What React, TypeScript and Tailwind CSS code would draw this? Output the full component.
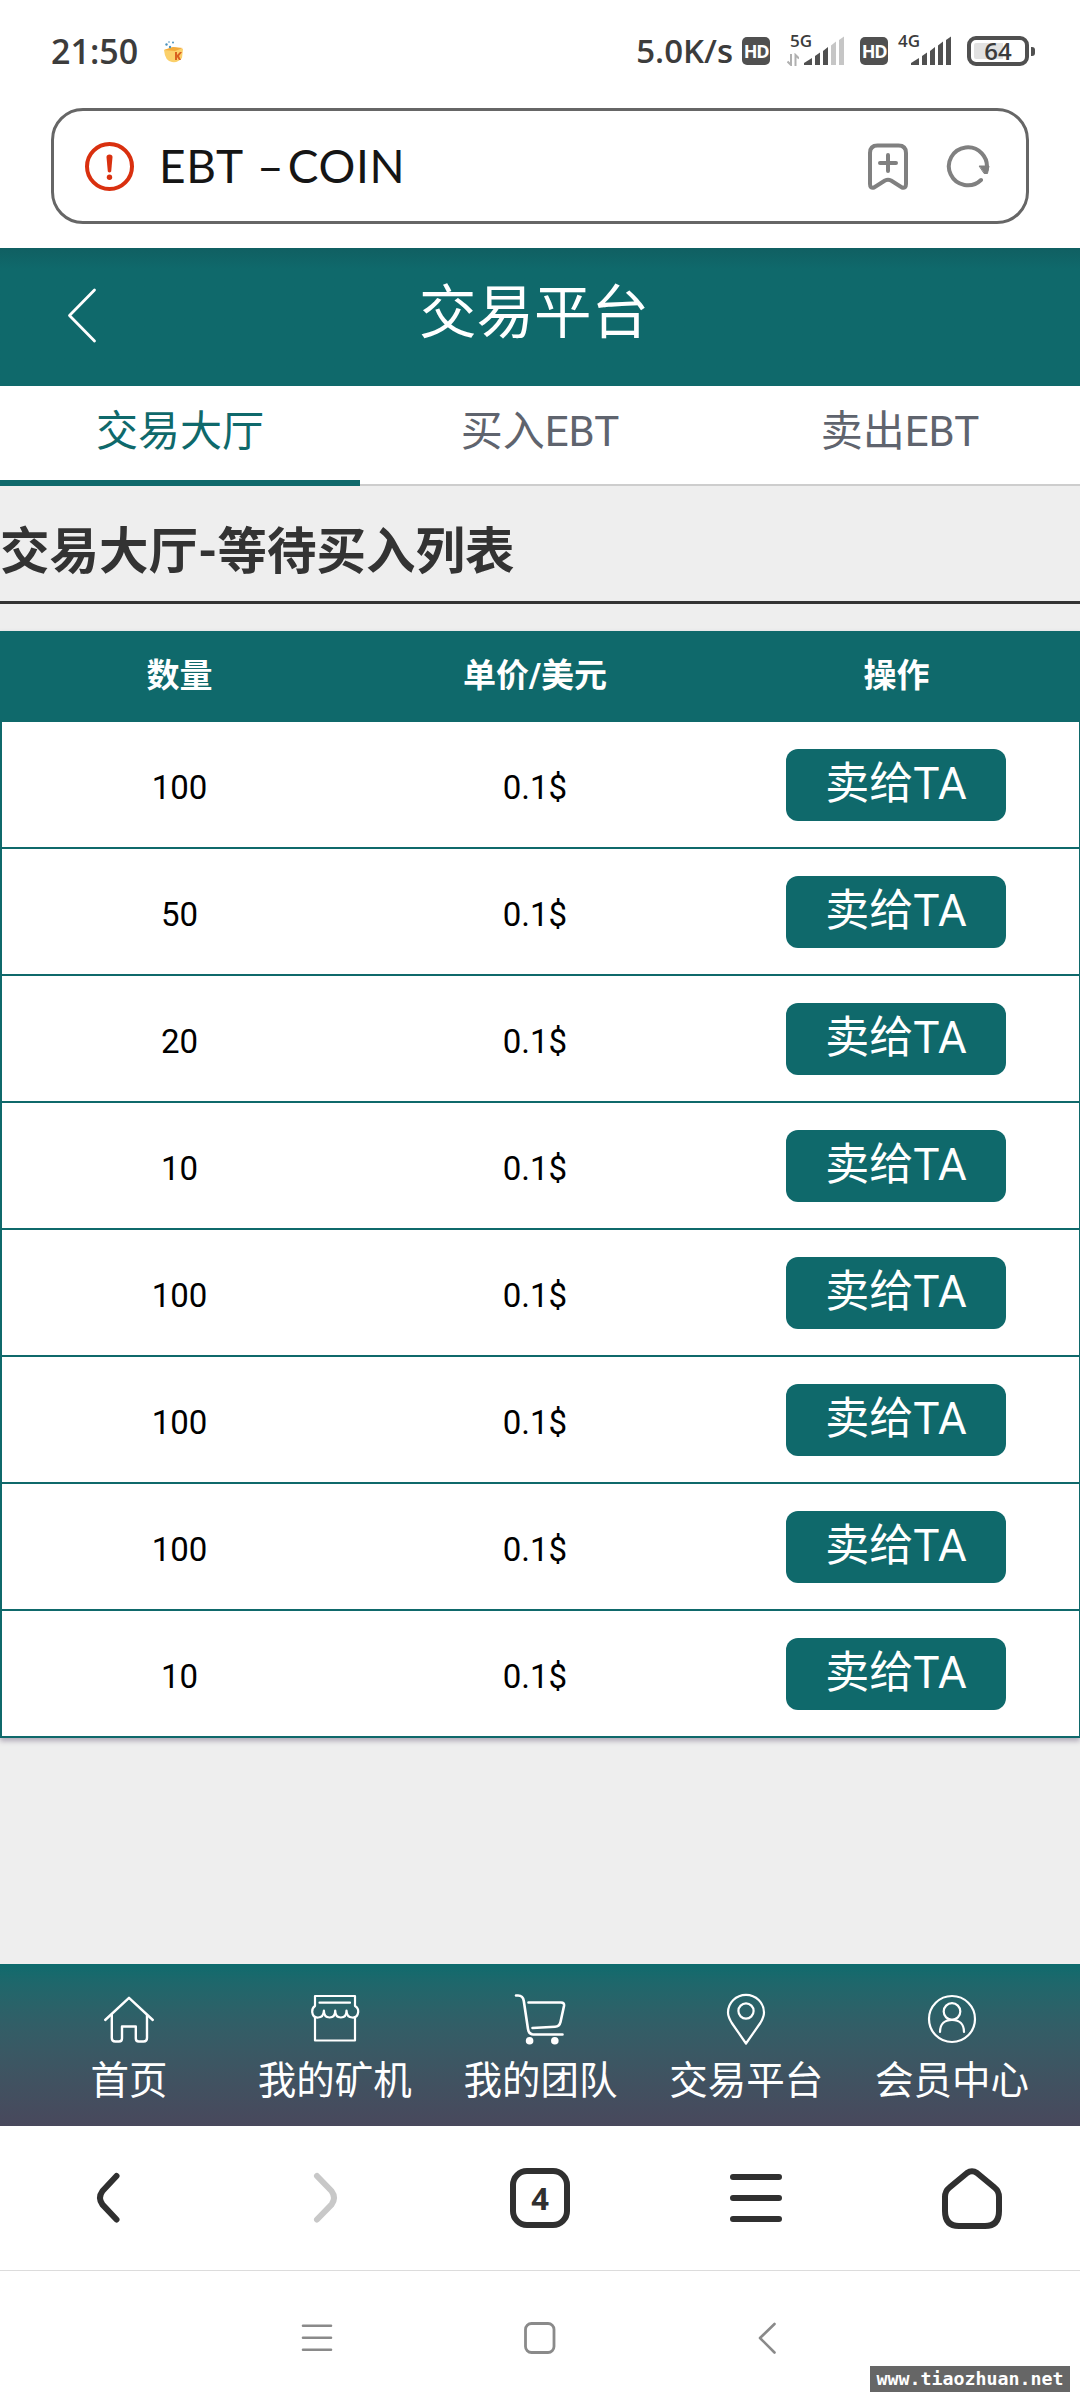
import type { ReactNode } from "react";

const CJK = "font-['Roboto','Noto_Sans_CJK_SC',sans-serif]";

type IconProps = { box: string; w: number; h: number; children: ReactNode; className?: string };

function Icon({ box, w, h, children, className = "" }: IconProps) {
  return (
    <svg
      viewBox={box}
      width={w}
      height={h}
      fill="none"
      stroke="currentColor"
      strokeLinecap="round"
      strokeLinejoin="round"
      className={`block shrink-0 ${className}`}
    >
      {children}
    </svg>
  );
}

function SignalBars({ strong }: { strong: number }) {
  const bars = [
    "M0 28V26L8 21V28Z",
    "M11 28V19L16 15.5V28Z",
    "M19 28V14L24 10V28Z",
    "M27 28V8.500L32 4.500V28Z",
    "M35 28V3L40 -0.500V28Z",
  ];
  return (
    <svg viewBox="0 -1 40 30" width="40" height="30" className="block">
      {bars.map((d, i) => (
        <path key={d} d={d} fill={i < strong ? "#505050" : "#c6c6c6"} />
      ))}
    </svg>
  );
}

function HdBadge() {
  return (
    <div className="flex h-7 w-7 items-center justify-center rounded-[5px] bg-[#505050] font-['Open_Sans',sans-serif] text-[18px] leading-none font-bold tracking-[-1.2px] text-white">
      HD
    </div>
  );
}

function StatusBar() {
  return (
    <div className="flex h-[108px] items-start pt-[34px] pr-[45px] pl-[51px] font-['Open_Sans',sans-serif] text-[#3c3c3c]">
      <div className="w-[89px] text-[34px] leading-[34px] font-semibold whitespace-nowrap">21:50</div>
      <svg viewBox="162 40 22 24" width="22" height="24" className="mt-[6px] ml-[22px] block">
        <path d="M164 50l9-3 10 2-1 9q-4 5-10 4-7-1-8-12Z" fill="#fbd06a" />
        <path d="M164 50l9-3 10 1-8 3Z" fill="#f3ab3c" />
        <path d="M175 52l2 0v3l3-3h2l-3 4 2 4h-2l-2-3v3h-2Z" fill="#d9601f" />
        <g fill="#4c93bd">
          <circle cx="166.500" cy="44.500" r="1.200" />
          <circle cx="170" cy="47" r="1.200" />
          <circle cx="173" cy="42.500" r="1" />
          <circle cx="169" cy="42" r="0.800" />
        </g>
      </svg>
      <div className="ml-auto text-[33px] leading-[34px] font-semibold whitespace-nowrap">5.0K/s</div>
      <div className="mt-[3px] ml-[9px]">
        <HdBadge />
      </div>
      <div className="ml-[17px] flex w-[57px] justify-between">
        <div className="flex w-[16px] flex-col">
          <span className="pl-[3px] text-[17px] leading-[13px] font-semibold">5G</span>
          <svg viewBox="787 52 12 13" width="12" height="13" className="mt-[6px] block" fill="none" stroke="#b0b0b0" strokeWidth="2">
            <path d="M791 53V64L787.500 60.500M795.500 65V54L799 57.500" />
          </svg>
        </div>
        <div className="mt-[2px]">
          <SignalBars strong={3} />
        </div>
      </div>
      <div className="mt-[3px] ml-4">
        <HdBadge />
      </div>
      <div className="ml-[10px] flex w-[53px] justify-between">
        <span className="w-[13px] text-[17px] leading-[13px] font-semibold">4G</span>
        <div className="mt-[2px]">
          <SignalBars strong={5} />
        </div>
      </div>
      <div className="mt-[2px] ml-4 flex items-center gap-[2px]">
        <div className="flex h-[30px] w-[62px] items-center justify-center rounded-[9px] border-4 border-[#505050] bg-linear-to-r from-[#e2e2e2] from-60% to-white to-60% bg-clip-content p-[3px] text-[24px] leading-none font-semibold">
          64
        </div>
        <div className="h-[9px] w-1 rounded-r-[3px] bg-[#505050]" />
      </div>
    </div>
  );
}

function AddressBar() {
  return (
    <div className="mx-[51px] mb-6 flex h-[116px] items-center rounded-[32px] border-[3px] border-[#666] pr-[35px] pl-[31px]">
      <Icon box="85 142 49 49" w={49} h={49} className="text-[#d9300f]">
        <circle cx="109.500" cy="166.500" r="22.500" strokeWidth="4" />
        <path d="M106.500 157q0-2.500 3-2.500t3 2.500l-1.300 14.500q-1.700 2-3.400 0Z" fill="currentColor" stroke="none" />
        <circle cx="109.500" cy="177.200" r="2.700" fill="currentColor" stroke="none" />
      </Icon>
      <div className="ml-[25px] font-['Lato',sans-serif] text-[46px] leading-none tracking-[0.7px] whitespace-nowrap text-[#151515]">
        EBT{" "}<span className="pl-[2px] tracking-[4px]">–</span>COIN
      </div>
      <Icon box="867 142 42 47" w={42} h={47} className="ml-auto text-[#808080]">
        <path
          d="M870 152q0-7.500 7.500-7.500H898.500q7.500 0 7.500 7.500V183q0 4.500-4 3.500L891 179.500q-3-1.500-6 0L874 186.500q-4 1-4-3.500Z"
          strokeWidth="4"
        />
        <path d="M888 154V170M880 162H896" strokeWidth="4" />
      </Icon>
      <Icon box="945 143 46 46" w={46} h={46} className="ml-9 text-[#808080]">
        <path d="M981 180A19 19 0 1 1 986.500 170" strokeWidth="4" />
        <path d="M979.500 166H989L987.500 173.500H984.500Z" fill="currentColor" strokeWidth="1" />
      </Icon>
    </div>
  );
}

function PageHeader() {
  return (
    <header className="grid h-[138px] grid-cols-3 items-center bg-linear-to-b from-[#105f62] to-[#0f696b] to-15% text-white">
      <Icon box="66 287 32 58" w={32} h={58} className="-mt-1 ml-[66px]">
        <path d="M94.500 291L69.500 316.500L94.500 342" strokeWidth="2.800" />
      </Icon>
      <h1 className="-mt-[6px] pr-[12px] text-center text-[57.500px] leading-none whitespace-nowrap">交易平台</h1>
    </header>
  );
}

function Tabs() {
  return (
    <nav className="flex h-[100px] bg-white text-center text-[42px] leading-[92px] text-[#5f646e]">
      <div className="flex-1 border-b-[6px] border-[#0f696b] text-[#0f696b]">交易大厅</div>
      <div className="flex-1 border-b-2 border-[#cdcdcd]">买入EBT</div>
      <div className="flex-1 border-b-2 border-[#cdcdcd]">卖出EBT</div>
    </nav>
  );
}

const amounts = [100, 50, 20, 10, 100, 100, 100, 10];

function OrderTable() {
  return (
    <section className="mt-[27px] bg-white shadow-[0_3px_5px_rgba(60,40,80,0.35)]">
      <div className="grid h-[91px] grid-cols-[359px_352px_1fr] items-center bg-[#0f696b] pb-[3px] text-center text-[33px] leading-none font-bold text-white">
        <span>数量</span>
        <span>单价/美元</span>
        <span className="pl-[2px]">操作</span>
      </div>
      {amounts.map((amount, i) => (
        <div
          key={i}
          className="grid h-[127px] grid-cols-[355px_354px_1fr] items-center border-r border-b-2 border-l-2 border-[#0f696b] text-center text-[33px] leading-none text-black"
        >
          <span className="pt-[5px]">{amount}</span>
          <span className="pt-[5px] pl-[2px]">0.1$</span>
          <button className="mx-auto h-[72px] w-[220px] translate-x-px rounded-[12px] bg-[#0f696b] pb-[2px] text-[44px] leading-[70px] text-white">
            卖给TA
          </button>
        </div>
      ))}
    </section>
  );
}

const navItems: { label: string; icon: ReactNode }[] = [
  {
    label: "首页",
    icon: (
      <Icon box="103 1993 52 52" w={52} h={52}>
        <g strokeWidth="2.400">
          <path d="M105.200 2020L129 1997.800L152.800 2020" />
          <path d="M111.800 2015V2038q0 3.500 3.500 3.500H119q3 0 3-3V2026.500H135.800V2038.500q0 3 3 3H143.500q3.500 0 3.500-3.500V2015" />
        </g>
      </Icon>
    ),
  },
  {
    label: "我的矿机",
    icon: (
      <Icon box="309.500 1993 52 52" w={52} h={52}>
        <g strokeWidth="2.200">
          <path d="M315.500 1996H355.500V2006q3.500 2 3.200 6c-.5 4-3 5.800-6 5.500c-3 0-5.500-2-5.700-7c0 5-2.500 7-5.600 7s-5.700-2-5.700-7c0 5-2.500 7-5.600 7s-5.700-2-5.700-7c-.3 5-2.700 7-5.700 7c-3 .3-5.500-1.500-6-5.500q-.3-4 2.800-6Z" />
          <path d="M315.500 2017V2040.500H355.500V2017M320 2002.700H350.500" />
        </g>
      </Icon>
    ),
  },
  {
    label: "我的团队",
    icon: (
      <Icon box="514 1993 52 52" w={52} h={52}>
        <path
          d="M516 1995.500H518q5 0 5.800 5.500L528 2029q.8 5.500 5.500 5.500H562.500M528.500 2002.500H561q3.600 0 3 3.500L560.500 2022q-1 4.500-5.500 4.800L532.500 2028"
          strokeWidth="2.600"
        />
        <g fill="currentColor" stroke="none">
          <circle cx="529.600" cy="2040.800" r="3.800" />
          <circle cx="554.800" cy="2040.800" r="3.800" />
        </g>
      </Icon>
    ),
  },
  {
    label: "交易平台",
    icon: (
      <Icon box="720.200 1993 52 52" w={52} h={52}>
        <g strokeWidth="2.200">
          <path d="M746.200 2043.500L732 2023C729 2018 728.200 2016 728.200 2012.500A18 17.700 0 0 1 764.200 2012.500C764.200 2016 763.500 2018 760.500 2023Z" />
          <circle cx="746.200" cy="2011" r="7.600" />
        </g>
      </Icon>
    ),
  },
  {
    label: "会员中心",
    icon: (
      <Icon box="926 1993 52 52" w={52} h={52}>
        <g strokeWidth="2.200">
          <circle cx="952" cy="2019" r="23" />
          <circle cx="952" cy="2011.500" r="8.300" />
          <path d="M940 2032C940 2024 945 2019.800 952 2019.800S964 2024 964 2032" />
        </g>
      </Icon>
    ),
  },
];

function SiteNav() {
  return (
    <nav className="flex h-[162px] bg-linear-to-b from-[#0d6b6d] to-[#48485c] pr-[25px] pl-[26px] pt-[29px] text-white">
      {navItems.map((item) => (
        <div key={item.label} className="flex flex-1 flex-col items-center">
          {item.icon}
          <span className="mt-[14px] text-[38.500px] leading-[44px] whitespace-nowrap">{item.label}</span>
        </div>
      ))}
    </nav>
  );
}

function BrowserBar() {
  return (
    <nav className="grid h-[145px] grid-cols-5 items-center justify-items-center border-b border-[#dcdcdc] bg-white text-[#303030]">
      <Icon box="78 2166 60 64" w={60} h={64}>
        <path d="M116.500 2176L102.500 2191q-5 6.800 0 13.600L116.500 2219.500" strokeWidth="6" />
      </Icon>
      <Icon box="294 2166 60 64" w={60} h={64} className="text-[#c8c8c8]">
        <path d="M317 2176L331.500 2191q5 6.800 0 13.600L317 2219.500" strokeWidth="6" />
      </Icon>
      <div className="flex h-[60px] w-[60px] items-center justify-center rounded-[17px] border-[6px] border-[#303030] font-['Open_Sans',sans-serif] text-[31px] leading-none font-bold">
        4
      </div>
      <Icon box="726 2166 60 64" w={60} h={64}>
        <path d="M733 2177H779M733 2198H779M733 2219H779" strokeWidth="6" />
      </Icon>
      <Icon box="942 2166 60 64" w={60} h={64} className="overflow-visible">
        <path
          d="M967 2173Q972 2169.500 977 2173L994.500 2187.500Q999 2191 999 2197V2211Q999 2226 985 2226H959Q945 2226 945 2211V2197Q945 2191 949.500 2187.500Z"
          strokeWidth="6"
        />
      </Icon>
    </nav>
  );
}

function SystemBar() {
  return (
    <div className="relative flex h-[129px] bg-white pt-[49px] text-[#8a8a8a]">
      <Icon box="300 2320 34 36" w={34} h={36} className="ml-[300px]">
        <path d="M303 2325.700H331M303 2337.700H331M303 2349.700H331" strokeWidth="2.600" />
      </Icon>
      <Icon box="523 2320 34 36" w={34} h={36} className="ml-[189px]">
        <rect x="525.500" y="2323.500" width="28.500" height="29" rx="6" strokeWidth="2.800" />
      </Icon>
      <Icon box="756 2320 22 36" w={22} h={36} className="ml-[199px]">
        <path d="M774.500 2324L760 2338L774.500 2352.500" strokeWidth="2.600" />
      </Icon>
      <div className="absolute right-[10px] bottom-2 flex h-[26px] w-[200px] items-center justify-center bg-[#666] font-['DejaVu_Sans_Mono',monospace] text-[18.300px] leading-none font-bold text-white">
        www.tiaozhuan.net
      </div>
    </div>
  );
}

export default function App() {
  return (
    <div className={`flex h-[2400px] w-[1080px] flex-col overflow-hidden bg-white ${CJK}`}>
      <StatusBar />
      <AddressBar />
      <PageHeader />
      <Tabs />
      <main className="flex-1 bg-[#eee]">
        <h2 className="h-[118px] border-b-[3px] border-[#333] text-[49.500px] leading-[133px] font-bold text-[#333]">
          交易大厅-等待买入列表
        </h2>
        <OrderTable />
      </main>
      <SiteNav />
      <BrowserBar />
      <SystemBar />
    </div>
  );
}
